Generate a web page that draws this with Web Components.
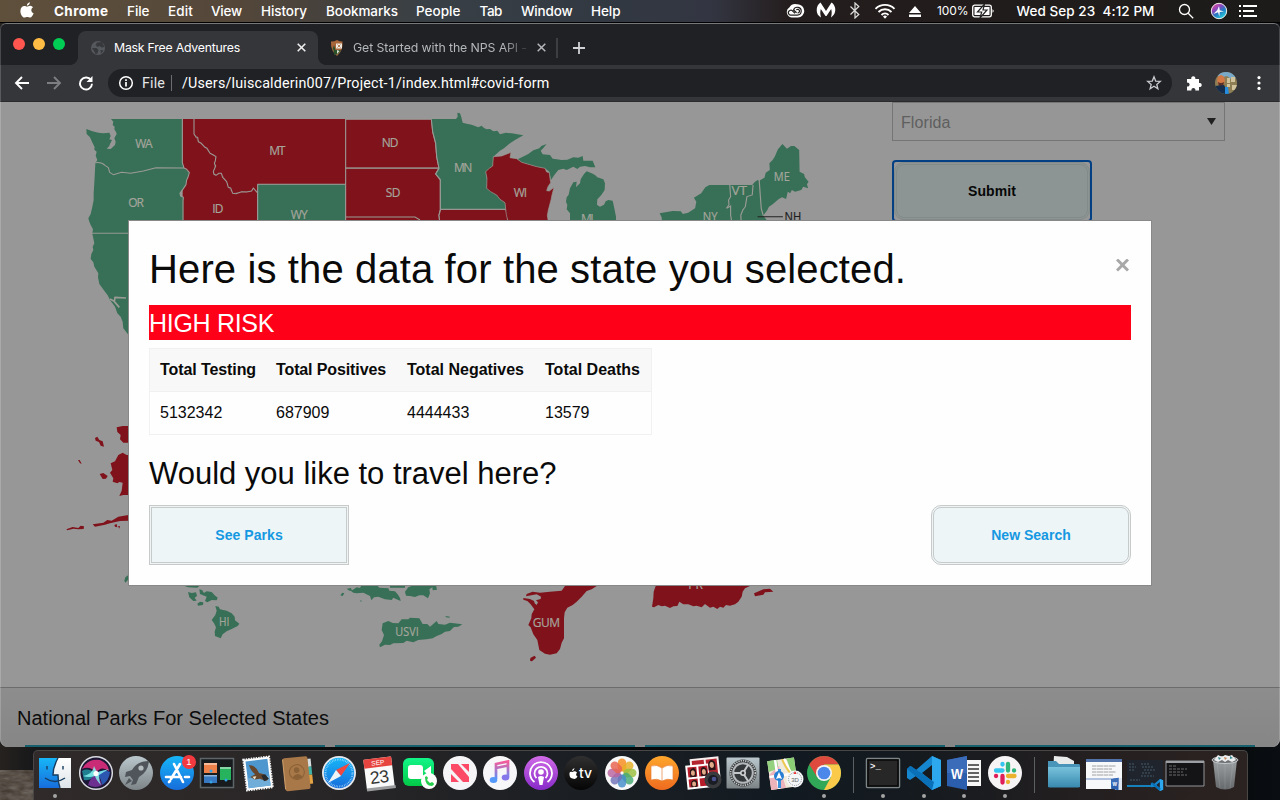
<!DOCTYPE html>
<html lang="en">
<head>
<meta charset="utf-8">
<title>Mask Free Adventures</title>
<style>
html,body{margin:0;width:1280px;height:800px;overflow:hidden;background:#08090b}
body{font-family:"Liberation Sans",Arial,sans-serif}
</style>
</head>
<body>
<mac-desktop>
  <menu-bar></menu-bar>
  <browser-window>
    <tab-strip slot="chrome"></tab-strip>
    <nav-bar slot="chrome"></nav-bar>
    <risk-map slot="main"></risk-map>
    <state-form slot="main"></state-form>
    <parks-section slot="parks">National Parks For Selected States</parks-section>
    <data-modal slot="modal"></data-modal>
  </browser-window>
  <mac-dock></mac-dock>
</mac-desktop>
<script>
const define = (name, html, extra) => customElements.define(name, class extends HTMLElement {
  connectedCallback() {
    if (this.shadowRoot) return;
    this.attachShadow({mode: 'open'}).innerHTML = typeof html === 'function' ? html(this) : html;
    if (extra) extra(this);
  }
});

// One line of text spaced to fill the width given in "w"
define('fit-text', '<style>:host{display:inline-block;white-space:pre;flex:none}</style><span><slot></slot></span>', el => {
  const w = parseFloat(el.getAttribute('w'));
  if (!w) return;
  const span = el.shadowRoot.querySelector('span');
  const n = el.textContent.length;
  const natural = span.getBoundingClientRect().width;
  el.style.width = w + 'px';
  span.style.letterSpacing = ((w - natural) / n) + 'px';
});

define('mac-desktop', `<style>:host{display:flex;flex-direction:column;width:1280px;height:800px;position:relative;overflow:hidden;
 background:linear-gradient(90deg,#26221f 0,#17181a 34px,#050608 500px,#06080a 1200px,#0a0e12 100%)}
 .rock{position:absolute;left:0;top:770px}</style>
 <svg class="rock" width="34" height="30"><defs><filter id="n"><feTurbulence type="fractalNoise" baseFrequency=".08 .2" numOctaves="3" seed="4"/><feColorMatrix values="0 0 0 0 .15  0 0 0 0 .13  0 0 0 0 .11  1.6 0 0 0 -.3"/></filter></defs><rect width="34" height="30" fill="#453c34"/><rect width="34" height="30" filter="url(#n)"/><path d="M0 10q12 1 18 9t14 11M0 3q18 1 33 8" stroke="#64574a" fill="none" opacity=".5"/></svg>
 <slot></slot>`);

define('menu-bar', `<style>
:host{display:flex;align-items:center;box-sizing:border-box;height:23px;padding:0 0 1px 20px;flex:none;border-bottom:1px solid #000;color:#fff;
 font:500 13.5px Inter,Roboto,sans-serif;background:linear-gradient(90deg,#5f503c 0,#54473a 240px,#45413d 330px,#384046 430px,#323841 620px,#333642 710px,#241d1d 790px,#1c1b19 100%)}
svg{flex:none;fill:#fff}b{font-weight:700}</style>
<svg width="14" height="17" viewBox="0 0 14 17"><path d="M9.9 .2c.1 1.4-1.1 3.3-3 3.5C6.700 2 8.200 .5 9.900 .2ZM7 4.600c.8 0 1.800-.9 3.300-.8 1.200.1 2.100.6 2.700 1.500-2.600 1.700-2 5 .6 6-.6 1.800-2 4.300-3.500 4.300-1.100 0-1.600-.7-2.900-.7s-1.800.7-2.800.7C2.500 15.700.4 12.300.4 9c0-3.300 2-5 4-5 1.100 0 2 .7 2.600.7Z"/></svg>
<fit-text style="margin-left:20px;font-weight:700" w="54.500">Chrome</fit-text>
<fit-text style="margin-left:18.500px" w="22.500">File</fit-text>
<fit-text style="margin-left:18.500px" w="25">Edit</fit-text>
<fit-text style="margin-left:18px" w="31">View</fit-text>
<fit-text style="margin-left:19px" w="46">History</fit-text>
<fit-text style="margin-left:19px" w="72">Bookmarks</fit-text>
<fit-text style="margin-left:18px" w="44.500">People</fit-text>
<fit-text style="margin-left:19px" w="22.500">Tab</fit-text>
<fit-text style="margin-left:19px" w="51.500">Window</fit-text>
<fit-text style="margin-left:18.500px" w="29.500">Help</fit-text>
<svg style="margin-left:164.500px" width="20" height="16" viewBox="0 0 20 16"><path d="M6.500 14.500A5.600 5.600 0 0 1 4.500 4.200 6.800 6.800 0 0 1 12 1.200a7 7 0 0 1 7.300 6.800 6.500 6.500 0 0 1-6.300 6.500Z"/><path d="M10 10.300 8 8.400a2.500 2.500 0 1 0-1.500 3.700h5.900a3.900 3.900 0 1 0-3.800-5.100l3 2.800m-.3-2.800a1.800 1.800 0 1 1 1.300 2.900" fill="none" stroke="#25201f" stroke-width="1.200"/></svg>
<svg style="margin-left:11px" width="20" height="17" viewBox="0 0 20 17"><path d="M4.500.5 10 9l5.500-8.500c3 2 4.500 6 3.500 9.500-.6 2.400-2 4-4 5.500.8-3 1-5.500.2-8.500L10.500 14h-1L4.800 7c-.8 3-.6 5.500.2 8.500C2 13.800.8 11.500.7 8.500.600 5 2 2.200 4.500.5Z"/></svg>
<svg style="margin-left:13px" width="12" height="17" viewBox="0 0 12 17"><path d="m1.500 4.500 8.300 8L6 16V1l3.800 3.500-8.300 8" fill="none" stroke="#ddd" stroke-width="1.200"/></svg>
<svg style="margin-left:13px" width="22" height="16" viewBox="0 0 22 16"><g fill="none" stroke="#fff" stroke-width="1.900"><path d="M1.500 5.800a13.500 13.500 0 0 1 19 0M4.500 9a9.200 9.200 0 0 1 13 0M7.500 12a5 5 0 0 1 7 0"/></g><path d="m11 15.800-2-2.200a2.800 2.800 0 0 1 4 0Z"/></svg>
<svg style="margin-left:12px" width="14" height="14" viewBox="0 0 14 14"><path d="M7 2l6 7H1ZM1 10.500h12V13H1Z"/></svg>
<fit-text style="margin-left:15px;font-size:12px;font-weight:400" w="31.500">100%</fit-text>
<svg style="margin-left:3.500px" width="23" height="14" viewBox="0 0 23 14"><rect x=".7" y="1.200" width="18.600" height="11.600" rx="2" fill="none" stroke="#fff" stroke-width="1.300"/><path d="M2.500 3h15v8h-15ZM20.500 5.300c1.600.5 1.600 3 0 3.500Z"/><path d="m12.500 0-7 8h4.200L8 14l7-8h-4Z" stroke="#222" stroke-width="1.200"/></svg>
<fit-text style="margin-left:21.500px" w="138">Wed Sep 23  4:12 PM</fit-text>
<svg style="margin-left:23.500px" width="16" height="16" viewBox="0 0 16 16"><g fill="none" stroke="#fff" stroke-width="1.300"><circle cx="6.500" cy="6.500" r="5"/><path d="m10.200 10.200 5 5"/></g></svg>
<svg style="margin-left:16px" width="18" height="18" viewBox="0 0 18 18"><defs><linearGradient id="s" x2=".7" y2="1"><stop stop-color="#fa4c8c"/><stop offset=".4" stop-color="#8c46bd"/><stop offset=".65" stop-color="#227bc2"/><stop offset="1" stop-color="#29d6e0"/></linearGradient></defs><circle cx="9" cy="9" r="7.700" fill="url(#s)" stroke="#eee"/><path d="m9 4 .8 4.200L14 9.500 9.800 10l-.5 4.500L8 10.200 3.500 12l3.800-4Z" opacity=".95"/></svg>
<svg style="margin-left:11px" width="18" height="14" viewBox="0 0 18 14"><path d="M0 1h2v2H0ZM4 1h14v2H4ZM0 6h2v2H0ZM4 6h11v2H4ZM0 11h2v2H0ZM4 11h14v2H4Z"/></svg>`);

define('browser-window', `<style>
:host{display:flex;flex-direction:column;position:relative;width:1280px;height:724px;flex:none;border-radius:6px 6px 8px 8px;overflow:hidden;background:#979797}
.top{display:flex;flex-direction:column;flex:none;background:#202124}
.page{display:flex;flex-direction:column;flex:1;min-height:0;position:relative;border-top:1px solid #2a2a2c;margin-top:-1px}
main{display:flex;height:585px;flex:none}
.frame{position:absolute;inset:0;border:1px solid #ffffff2e;border-top-color:#77787a;border-bottom:none;border-radius:6px 6px 8px 8px;pointer-events:none}
</style><div class="top"><slot name="chrome"></slot></div>
<div class="page"><main><slot name="main"></slot></main><slot name="parks"></slot><slot name="modal"></slot></div><div class="frame"></div>`);

define('tab-strip', `<style>
:host{display:flex;height:42px;align-items:flex-end;color:#fff;font:400 12.300px Inter,Roboto,sans-serif;background:#202124}
.lights{display:flex;gap:8px;width:65px;padding-left:13px;align-self:flex-start;padding-top:15px}
.lights i{width:12px;height:12px;border-radius:50%}
.tab{display:flex;align-items:center;height:34px;box-sizing:border-box;padding-bottom:1px}
.on{width:240px;background:#35363a;border-radius:8px 8px 0 0;padding-left:12px;position:relative}
.on:before,.on:after{content:"";position:absolute;bottom:0;width:8px;height:8px}
.on:before{left:-8px;background:radial-gradient(circle at 0 0,#202124 7.600px,#35363a 8.200px)}
.on:after{right:-8px;background:radial-gradient(circle at 100% 0,#202124 7.600px,#35363a 8.200px)}
.off{width:240px;padding-left:11px;color:#b4b7bb}
.fade{-webkit-mask:linear-gradient(90deg,#000 150px,#0002 174px);mask:linear-gradient(90deg,#000 150px,#0002 174px)}
svg{flex:none}</style>
<div class="lights"><i style="background:#ff5650"></i><i style="background:#ffbd45"></i><i style="background:#00ce54"></i></div>
<div class="tab on"><svg width="16" height="16" viewBox="0 0 16 16"><circle cx="8" cy="8" r="7" fill="#55585d"/><path d="M7 2.500 12 2l2.500 5-3 .5L9.500 6 7.500 7l-2-2ZM2 8h4.500l2 2-1 3.500-2 .5L4 11Zm8.500 2 3 .5-2.500 3Z" fill="#36383c"/></svg>
<fit-text w="126" style="margin-left:8px">Mask Free Adventures</fit-text>
<svg style="margin-left:56px" width="11" height="11" viewBox="0 0 11 11"><path d="m1.700 1.700 7.600 7.600m0-7.600-7.600 7.600" stroke="#eee" stroke-width="1.600"/></svg></div>
<div class="tab off"><svg width="16" height="18" viewBox="0 0 16 18"><path d="M2 2.500Q5 2.700 8 1q3 1.700 5.500 1.500.8 9-5.500 14.500Q1.300 11.500 2 2.500Z" fill="#a8663a"/><path d="M7 4.500h6v5H7Z" fill="#f0ece2"/><path d="m8.500 5.500 3 3m0-3-3 3" stroke="#a8663a" stroke-width=".8"/><path d="M5 6 3.500 10.500h1L5.200 16 9 15l3-4H6.500Z" fill="#29502b"/><path d="m8 11 2.500 1L8 15Z" fill="#d8e3d4"/></svg>
<fit-text class="fade" w="174" style="margin-left:8px">Get Started with the NPS API -</fit-text>
<svg style="margin-left:8.500px" width="11" height="11" viewBox="0 0 11 11"><path d="m1.700 1.700 7.600 7.600m0-7.600-7.600 7.600" stroke="#b5b7ba" stroke-width="1.500"/></svg></div>
<div class="tab" style="margin-left:-2px"><svg width="32" height="20" viewBox="0 0 32 20"><path d="M1 0v20" stroke="#5a5c60"/><path d="M23 4v12M17 10h12" stroke="#d0d2d5" stroke-width="1.800"/></svg></div>`);

define('nav-bar', `<style>
:host{display:flex;align-items:center;height:37px;box-sizing:border-box;background:#35363a;color:#fff;padding-left:14px;font:400 14.300px Roboto,sans-serif;border-bottom:1px solid #28292c}
svg{flex:none;fill:none;stroke:#fff;stroke-width:1.900}
.omni{display:flex;align-items:center;width:1064px;height:28px;border-radius:14px;background:#202124;margin-left:14px;box-sizing:border-box;padding-left:10px}
</style>
<svg width="16" height="16" viewBox="0 0 16 16"><path d="M15 8H2.500M8 2 2 8l6 6"/></svg>
<svg style="margin-left:16px;stroke:#7c7e82" width="16" height="16" viewBox="0 0 16 16"><path d="M1 8h12.500M8 2l6 6-6 6"/></svg>
<svg style="margin-left:16px" width="16" height="16" viewBox="0 0 16 16"><path d="M13 5.200A6 6 0 1 0 14 8.800"/><path d="M14.500 1v6h-6Z" fill="#fff" stroke="none"/></svg>
<div class="omni"><svg width="16" height="16" viewBox="0 0 16 16" style="stroke-width:1.500"><circle cx="8" cy="8" r="6.300"/><path d="M8 7v4.500M8 4.200v1.700" stroke-width="1.700"/></svg>
<fit-text w="23" style="margin-left:8px;color:#e4e5e7">File</fit-text><i style="width:1px;height:16px;background:#6b6d71;margin-left:6px"></i>
<fit-text w="367.500" style="margin-left:10px">/Users/luiscalderin007/Project-1/index.html#covid-form</fit-text>
<svg style="margin-left:596px" width="16" height="16" viewBox="0 0 16 16"><path d="m8 1.800 1.700 4.300 4.600.3-3.500 3 1.100 4.400L8 11.300l-3.900 2.500 1.100-4.400-3.500-3 4.600-.3Z" stroke="#c8cacd" stroke-width="1.300"/></svg></div>
<svg style="margin-left:14px" width="16" height="16" viewBox="0 0 16 16"><path d="M1 4h4.300a2.100 2.100 0 1 1 4 0H13v4a2.100 2.100 0 1 1 0 4v3.500H9.300a2 2 0 1 0-3.800 0H1v-4a2 2 0 1 0 0-3.800Z" fill="#fff" stroke="none"/></svg>
<svg style="margin-left:13px;stroke:none" width="22" height="22" viewBox="0 0 22 22"><defs><clipPath id="c"><circle cx="11" cy="11" r="11"/></clipPath></defs><g clip-path="url(#c)"><path d="M0 0h22v22H0Z" fill="#8d7d55"/><path d="M0 0h22v6l-6 1-4-3-7 2Z" fill="#78a9c9"/><path d="M12 6h3v5h-3ZM16 5h4v5h-4ZM17 13h5v5h-5ZM12 12h3v3h-3Z" fill="#d0c29a"/><ellipse cx="6" cy="8.500" rx="3.800" ry="5.500" fill="#d27946"/><path d="M3 10q3 2 6 0l-1 5H4Z" fill="#5a3027"/><path d="M0 14l9-1 5 9H0Z" fill="#162e4b"/><path d="m10 15 3 0 1 7h-4Z" fill="#268cdd"/></g></svg>
<svg style="margin-left:18.500px;stroke:none" width="6" height="16" viewBox="0 0 6 16"><g fill="#fff"><circle cx="3" cy="2.600" r="1.600"/><circle cx="3" cy="8" r="1.600"/><circle cx="3" cy="13.400" r="1.600"/></g></svg>`);

define('risk-map', `<style>:host{display:block;width:860px;height:585px;flex:none}
svg{display:block}.g{fill:#387057}.r{fill:#80121b}path{stroke:#9b9b96;stroke-width:0}.b path{stroke-width:3.200}.l{fill:none!important;stroke-width:3.200}
text{font-family:"Open Sans","Noto Sans",sans-serif;font-size:36px;fill:#a5a59c;stroke:#a5a59c;stroke-width:.6px}</style>
<svg width="860" height="585" viewBox="0 102 860 585">
<g transform="translate(60 100) scale(.333333)">
<g class="b" stroke-linejoin="round">
<path class="r" d="M368 57H402V102L415 125 435 142 450 160 468 170 465 190 460 215 468 226 484 220 500 245 505 262 518 280 545 275 575 273 580 264 591 277V400H368Z" style="stroke-width:0"/>
<path class="r" d="M402 57H857V252H593V277L580 264 575 273 545 275 518 280 505 262 500 245 484 220 468 226 460 215 465 190 468 170 450 160 435 142 415 125 402 102Z" style="stroke-width:0"/>
<path class="l" d="M402 57V102L409 112 413 112 415 125 424 130 435 142 441 145 450 160 460 165 468 170 466 182 463 190 467 198 460 215 462 223 468 226 476 220 484 220 488 232 500 245 505 262 512 264 518 280 528 281 545 275 560 276 575 273 580 264 591 277"/>
<path class="g" d="M593 400V253H857V400Z"/>
<path class="g" style="stroke-width:0" d="M153 57H367L367 188 372 204 388 218 380 240 376 258 360 280 362 288 370 292V400H97L99 388 92 375 88 365 85 355 92 342 97 320 101 300V280L104 230 106 190 112 180 107 167 110 155 103 149 104 142 96 125 90 112 80 102 79 87 95 93 115 98 130 100 148 98 152 108 148 118 156 120 150 132 148 138 140 146 152 147 165 135 167 125 163 115 170 102 168 96 163 88 164 80 158 75 160 65Z"/>
<path class="l" d="M367 57V188L372 204 380 208 388 218 384 232 380 240 378 254 370 266 360 280 362 288 370 292 369 304V400M106 188Q125 185 135 196L145 203 149 217 160 224 185 217 212 220 250 213 288 203 372 204M95 400H206"/>
<path class="g" style="stroke-width:0" d="M97 401H205L300 720 210 715 204 703 190 685 188 665 182 650 172 640 165 620 150 600 143 586 135 575 118 552 114 532 115 520 103 500 100 487 92 477 94 462 100 450 98 440 103 430Z"/>
<path class="l" d="M198 594 165 592 163 605 178 622M150 597 165 605" style="stroke-width:5"/>
</g>
<text x="226" y="144" textLength="52">WA</text><text x="628" y="165" textLength="48">MT</text><text x="205" y="320" textLength="47">OR</text><text x="457" y="340" textLength="33">ID</text><text x="692" y="357" textLength="51">WY</text></g>
<g transform="translate(340 100) scale(.333333)"><g class="b">
<path class="r" d="M17 58H275L278 95 287 130 290 170 297 204H17Z"/><path class="r" d="M17 205H297L287 222 301 240V328L297 345 300 375H17Z"/><path class="l" d="M17 351H225L240 360"/>
<path class="r" d="M302 328H497L503 345 503 375H300L297 345Z"/>
<path class="g" style="stroke-width:0" d="M274 57H348L353 50 352 38 360 40 364 52 368 68 380 71 395 74 415 82 425 77 432 84 440 88 450 87 460 94 472 92 480 103 498 98 515 100 550 106 525 120 510 130 492 145 480 152 460 170 458 198 437 215 441 240 440 265 470 285 480 298 495 308 497 327H303L301 238 287 222 297 205 290 170 287 130 278 95Z"/>
<path class="l" d="M274 58 278 95 287 130 290 170 297 205 287 222 301 238V328H497"/>
<path class="g" style="stroke-width:0" d="M533 178 565 162 580 151 598 145 604 138 620 132 610 144 602 152 608 163 630 165 638 176 650 178 665 180 682 179 700 172 715 173 728 168 730 182 758 182 766 202 750 202 735 198 720 200 712 207 700 200 680 210 670 206 655 210 643 225 633 240 628 215 615 205 590 200 545 187Z"/>
<path class="r" style="stroke-width:2" d="M460 170 485 168 513 157 510 173 530 176 545 187 590 200 615 205 620 216 628 218 630 235 632 248 624 260 620 272 628 273 642 262 636 285 633 300 625 330 622 347 627 375H503V360L499 345 495 308 480 298 470 285 452 275 440 265 441 235 437 215 448 205 458 198Z"/>
<path class="g" style="stroke-width:0" d="M732 222 740 214 755 220 765 225 772 232 790 238 795 250 794 270 784 285 772 298 771 314 780 320 792 314 797 304 805 300 818 302 824 330 828 350V375H690V340L680 328 682 315 678 305 680 292 686 284 690 265 700 247 710 245 708 262 720 250 722 238Z"/></g>
<text x="125" y="140" textLength="50">ND</text><text x="342" y="217" textLength="55">MN</text><text x="137" y="290" textLength="44">SD</text><text x="521" y="290" textLength="40">WI</text><text x="723" y="370" textLength="38">MI</text></g>
<g transform="translate(640 100) scale(.408163 .333333)">
<path class="g" d="M349 132 360 146 370 138 378 138 390 150 391 215 402 222 404 232 413 245 409 253 412 265 400 260 395 270 380 275 372 270 368 280 362 275 358 297 348 292 340 297 325 313 316 320 312 330 302 347 320 375H55L53 352 48 340 80 333 100 334 105 342 118 338 135 325 138 305 132 293 150 280 160 262 170 255H275L281 246 288 240 292 242 305 233 308 218 318 210 317 190 325 180 330 170 338 148Z"/>
<path class="l" d="M220 255 222 290 217 300 218 314 212 325 222 318 222 345 226 375M277 255 275 285 262 290 258 320 252 330 247 345 248 375M292 240 297 325 302 347" style="stroke-width:2.800"/><path d="M288 350H350" style="stroke:#222;stroke-width:3"/>
<text x="328" y="243" textLength="39" lengthAdjust="spacingAndGlyphs">ME</text><text x="224" y="284" textLength="38" lengthAdjust="spacingAndGlyphs">VT</text><text x="154" y="362" textLength="36" lengthAdjust="spacingAndGlyphs">NY</text><text x="354" y="362" textLength="41" lengthAdjust="spacingAndGlyphs" style="fill:#1d1d1d;stroke:#1d1d1d">NH</text></g>
<g transform="translate(60 420) scale(.333333)">
<path class="r" d="M170 22 188 18H215V68H190L180 58 182 45 172 36ZM105 54 112 50 118 60 128 64 132 80 122 77 117 66 107 62ZM54 120 59 120 65 131 60 130ZM152 130 165 124 175 105 188 98 200 105 215 105V225H190L178 228 185 212 188 188 178 186 172 190 158 185 160 175 150 158 157 150ZM119 162 130 159 143 168 138 176 128 177ZM98 313 130 308 142 300 155 302 175 290 205 285V302L180 303 150 310 135 314 105 320ZM19 328 38 321 55 324 62 317 72 319 71 327 55 328 40 326 22 331ZM163 315 170 312 172 322 165 320ZM174 319 180 318 178 326Z"/>
<path class="g" d="M193 482 196 472 206 464V478L196 488ZM365 495H421L412 503 385 502ZM384 516 395 519 408 517 411 528 404 533 410 542 400 543 388 532ZM418 508 426 510 432 519 440 514 455 516 464 526 473 533 470 541 455 540 442 547 435 543 440 530 420 522ZM412 551 420 545 430 547 429 555 414 557ZM466 558 476 560 480 568 500 572 515 580 524 590 525 601 538 611 533 618 515 627 500 634 488 643 482 655 465 648 464 635 468 622 462 610 455 600 466 585 470 572ZM841 526 847 518 853 520 848 528ZM860 506 873 504 876 512 868 512ZM873 513 890 502 900 504 905 495H950L958 503 985 505 988 512 1005 514 1013 523 1020 534 1022 543 1008 537 1000 533 995 540 975 538 955 530 942 532 934 541 930 528 910 518 890 520 880 518ZM990 498H1035V503H990ZM1035 515 1045 502 1060 496H1128L1131 509 1118 511 1117 502 1108 508 1110 520 1104 535 1090 526 1078 526 1065 531 1050 528 1038 527ZM901 541 906 542 902 546ZM968 610 985 603 998 609 1015 610 1025 598 1045 598 1050 593 1078 595 1088 612 1102 612 1110 620 1130 603 1135 612 1155 614 1170 608 1207 613 1195 620 1182 621 1170 633 1155 635 1145 642 1130 648 1118 655 1100 658 1075 660 1060 667 1040 662 1030 669 1000 670 990 675 975 674 960 682 958 674 966 664 972 645 965 630ZM1156 588 1170 590 1168 593 1158 592Z"/>
<text x="477" y="618" textLength="31" lengthAdjust="spacingAndGlyphs">HI</text><text x="1006" y="648" textLength="70" lengthAdjust="spacingAndGlyphs">USVI</text></g>
<g transform="translate(440 575) scale(.333333)">
<path class="r" d="M375 33H470L455 43 440 48 425 65 410 80 398 90 382 98 374 112 372 130V190L365 203 360 222 350 235 330 239 315 236 298 225 292 195 280 178 272 157 265 150 274 130 275 118 283 103 272 88 262 78 250 74V69L270 72 282 78 284 85 290 90 294 82 288 76 302 72 303 65 290 58 258 64 260 57 278 50 300 53 330 50 365 47ZM270 254 272 248 284 242 288 248 276 259 271 258ZM647 33H930L915 40 908 50 905 65 895 80 885 88 870 92 858 90 850 98 840 95 832 102 820 95 810 98 795 87 785 97 770 92 760 94 745 88 730 88 718 80 712 93 700 94 690 99 675 92 665 94 655 90 642 97 636 95 640 70 641 50ZM942 55 953 50 970 43 990 41 1000 50 975 52 970 59 945 64Z"/>
<text x="278" y="155" textLength="82">GUM</text><text x="745" y="42" textLength="44">PR</text></g>
</svg>`);

define('push-button', `<style>:host{display:flex;align-items:center;justify-content:center;box-sizing:border-box;width:200px;height:60px;border:3px double #c8caca;background:#edf5f7;color:#1598e2;font-weight:700;font-size:14px;flex:none}
:host([round]){border-radius:10px}</style><slot></slot>`);

define('state-form', `<style>:host{display:flex;flex-direction:column;gap:19px;padding:0 0 0 32px;width:333px;align-items:flex-start;overflow:hidden}
.sel{display:flex;align-items:center;justify-content:space-between;width:333px;height:39px;box-sizing:border-box;border:1px solid #757575;background:#969696;color:#5f5f5f;padding:2px 8px 0;font-size:16px}
.ring{border-radius:4px;background:#979797;box-shadow:inset 0 0 0 2px #023f83;width:200px;height:62px;box-sizing:border-box;padding:2px}
push-button{width:196px;height:58px;background:#8c9594;color:#070707;border:3px double #838a8a}</style>
<div class="sel"><fit-text w="49.500">Florida</fit-text><svg width="9" height="7" style="margin-top:-3px"><path d="M0 0h9l-4.500 7Z" fill="#202020"/></svg></div>
<div class="ring"><push-button round><fit-text w="48">Submit</fit-text></push-button></div>`);

define('parks-section', `<style>:host{display:flex;flex-direction:column;box-sizing:border-box;height:60px;border-top:1px solid #6c6c6c;background:linear-gradient(#8d8d8d,#868686);color:#0c0c0c;font-size:20px}
.t{height:57px;line-height:61px;padding-left:17px}.row{display:flex;gap:10px;padding-left:25px}.row i{width:300px;height:2px;background:#16606d}</style>
<div class="t"><fit-text w="312">National Parks For Selected States</fit-text></div><div class="row"><i></i><i></i><i></i><i></i></div>`);

define('data-modal', `<style>:host{position:absolute;left:128px;top:118px;width:1024px;height:366px;box-sizing:border-box;border:1px solid #888;background:#fefefe;padding:20px;display:flex;flex-direction:column;color:#0a0a0a}
.h{display:flex;justify-content:space-between;height:56px;line-height:57px;font-size:40px}
.x{padding:17.500px 2px 0}
.risk{margin-top:8px;height:35px;line-height:37px;background:#ff0019;color:#fefefe;font-size:25px}
.tbl{display:grid;grid-template-columns:116px 131px 138px 116px;width:501px;margin-top:8px;border:1px solid #f1f1f1;font-size:16px}
.tbl>*{box-sizing:border-box;height:42px;padding-left:10px;line-height:42px}
.th{background:#f8f8f8;font-weight:700;border-bottom:1px solid #f0f0f0;height:43px}
.q{margin-top:16px;height:54px;line-height:45px;font-size:31px}
.btns{display:flex;justify-content:space-between}</style>
<div class="h"><fit-text w="757">Here is the data for the state you selected.</fit-text><svg class="x" width="13" height="13" viewBox="0 0 13 13"><path d="m1 1 11 11M12 1 1 12" stroke="#a8a8a8" stroke-width="3"/></svg></div>
<div class="risk"><fit-text w="125">HIGH RISK</fit-text></div>
<div class="tbl"><div class="th"><fit-text w="96">Total Testing</fit-text></div><div class="th"><fit-text w="110">Total Positives</fit-text></div><div class="th"><fit-text w="117">Total Negatives</fit-text></div><div class="th"><fit-text w="95">Total Deaths</fit-text></div>
<div>5132342</div><div>687909</div><div>4444433</div><div>13579</div></div>
<div class="q"><fit-text w="407.500">Would you like to travel here?</fit-text></div>
<div class="btns"><push-button><fit-text w="67.500">See Parks</fit-text></push-button><push-button round><fit-text w="79.500">New Search</fit-text></push-button></div>`);

// Dock artwork, drawn round the centre of each 40px cell
const word = (x, y, s) => `<g transform="translate(${x} ${y}) scale(${s})"><path d="M-16-13 4-17V17L-16 13Z" fill="#2b5eac"/><path d="M-16-13 4-17V0H-16Z" fill="#3a6cb9"/><text x="-6" y="5.500" font-size="15" font-weight="700" fill="#fff" text-anchor="middle" textLength="12" lengthAdjust="spacingAndGlyphs">W</text></g>`;
const code = (x, y, s) => `<g transform="translate(${x} ${y}) scale(${s})"><path d="M8-17 17-13V13L8 17-8 3-14 7-17 5V-4L-14-7-8-3ZM8-8-2 0 8 8Z" fill="#1687cf" fill-rule="evenodd"/><path d="M8-17 17-13V13L8 17Z" fill="#2da7ee"/><path d="m-17-4 4-3L10 9l-2 8Z" fill="#0a70b7"/></g>`;
const art = {
finder:`<path d="M-16-15H16V15H-16Z" fill="url(#w)"/><path d="M-16-15H3Q-2-6-2 2H3Q3 9 5 15H-16Z" fill="url(#bl)"/><path d="M-8-7v3.500M8-7v3.500M-10 5Q0 12 10 5M3-15Q-2-6-2 2H3Q3 9 5 15" fill="none" stroke="#173c60" stroke-width="1.400"/>`,
siri:`<circle r="16.300" fill="#1b1734" stroke="#dadce2" stroke-width="1.500"/><path d="M-14-4Q-8-15 4-13 12-10 13-2 5-8 0 0-6-8-14-4Z" fill="#c92b76"/><path d="M-14-2Q-8-6 0 1-4 8-12 7Z" fill="#1f7f91"/><path d="M0 0Q8-5 14-1 13 8 6 12 5 4 0 0Z" fill="#2b57b0"/><path d="M0 1Q-6 5-8 12 0 16 6 12 4 5 0 1Z" fill="#6c2f8f"/><path d="M-13 3Q-3 1-2-7 0-2 2-1L13-4Q6 0 3 2 3 8 5 12 0 7-1 3-7 5-13 3Z" fill="#86f3f0" opacity=".85"/><circle cy=".5" r="2.600" fill="#fff"/>`,
rocket:`<circle r="17" fill="url(#gr)"/><path d="M13-12Q1-12-4-3L-10-1-11 4-6 3-3 7-5 12 0 11 3 4Q12-1 13-12Z" fill="#4f555a"/><circle cx="5" cy="-5" r="2.600" fill="#b4bcc0"/><path d="m-7 5-4 7 7-4Z" fill="#4f555a"/>`,
store:`<circle r="17" fill="url(#bl)"/><path d="M-3-9 6 9M3-9-6 6M-11 4H4M8 4h4M-8 9l1-1" stroke="#fff" stroke-width="2.600" stroke-linecap="round"/><circle cx="12" cy="-11" r="7" fill="#f2393f"/><text x="12" y="-7.600" font-size="9.500" fill="#fff" text-anchor="middle">1</text>`,
mission:`<rect x="-16.500" y="-14.500" width="33" height="29" fill="#181b1e" stroke="#5d6669" stroke-width="1.500"/><path d="M-13-10H0V0H-13Z" fill="#ee8149"/><path d="M-13 2H0V10H-13Z" fill="#3778c1"/><path d="M3-6H14V7H3Z" fill="#27b25d"/><path d="M-13-10H0V-8H-13ZM-13 2H0V3.500H-13ZM3-6H14V-4H3Z" fill="#fff" opacity=".45"/><g fill="#32a4e8"><circle cx="-6" cy="-2" r="1.500"/><circle cx="9" cy="7" r="1.500"/><circle cx="-6" cy="9" r="1.500"/></g>`,
mail:`<g transform="rotate(-7)"><path d="M-13-15H13V16H-13Z" fill="#fff" stroke="#f5f5f5" stroke-width="2" stroke-dasharray="1.500 1"/><path d="M-11-13H11V14H-11Z" fill="#4d96ce"/><path d="M-11 4H11v10H-11Z" fill="#70add8"/><path d="M-8-9Q-1-8 1 0L6 2 10 7 7 9 1 6-4 6-8 3-3 1Q-7-3-8-9Z" fill="#65462c"/><path d="m3 3 4-1 3 5-5 2Z" fill="#282b2e"/><path d="m-6 3 4 0-2 3Z" fill="#f0e5d0"/></g>`,
contacts:`<g transform="rotate(-6)"><path d="M10-13h4V-5H10Z" fill="#d6dee0"/><path d="M10-5h4V3H10Z" fill="#42b4a7"/><path d="M10 3h4V12H10Z" fill="#e6a343"/><rect x="-14" y="-16" width="25" height="33" rx="2" fill="#a87848"/><path d="M-14-15v30" stroke="#d1a26d"/><g stroke="#8a6136" fill="none"><circle cx="-1" cy="-1" r="7.500"/></g><circle cx="-1" cy="-3" r="2.800" fill="#8a6136"/><path d="M-6 4Q-1-2 4 4-1 8-6 4" fill="#8a6136"/></g>`,
safari:`<circle r="17" fill="#e8e9ed"/><circle r="15.200" fill="url(#bl)"/><circle r="13.500" fill="none" stroke="#c0e9ff" stroke-width="2" stroke-dasharray=".5 1.200"/><path d="M11-10 2 3-3-3Z" fill="#f14840"/><path d="M-11 10 2 3-3-3Z" fill="#eef3f6"/>`,
calendar:`<g transform="rotate(-7)"><rect x="-14" y="-15" width="28" height="31" rx="1" fill="#fafafa"/><path d="M-14-15H14v9H-14Z" fill="#e7443f"/><path d="M-14 14h29v3h-29Z" fill="#9b9d9f"/><text y="-8" font-size="6.500" fill="#fff" text-anchor="middle">SEP</text><text x="0" y="10" font-size="17.500" fill="#333" text-anchor="middle" textLength="19">23</text></g>`,
facetime:`<rect x="-17" y="-15" width="31" height="28" rx="6" fill="url(#gn)"/><rect x="-12" y="-8" width="15" height="14" rx="3" fill="#fff"/><path d="m4-2 7-5V5Z" fill="#fff"/><circle cx="9" cy="8" r="8" fill="#fff"/><path d="M5 4q2-2 3 1l-1 2 3 3 2-1q4 2 0 4Q5 13 5 4Z" fill="#25cf4c"/>`,
news:`<circle r="17" fill="#f5f5f8"/><path d="M-9-9H-2L9 4V9H3L-9-4Z" fill="#fb4966"/><path d="M1-9H9V-1ZM-9 1V9H-1Z" fill="#fb4966"/>`,
music:`<circle r="17" fill="#f7f7fa"/><path d="M-4 6V-9L8-11.500V4M-4-5 8-7.500" stroke="url(#mu)" stroke-width="2.700" fill="none"/><ellipse cx="-6.500" cy="7" rx="3.800" ry="3" fill="#559afa"/><ellipse cx="5.500" cy="4.500" rx="3.800" ry="3" fill="#8676eb"/>`,
podcasts:`<circle r="17" fill="url(#pu)"/><g fill="none" stroke="#fff" stroke-width="1.800"><path d="M-6.500 9A11 11 0 1 1 6.500 9"/><path d="M-4.500 5A6.500 6.500 0 1 1 4.500 5"/></g><circle cy="-1" r="2.800" fill="#fff"/><path d="M-3 4Q0 2 3 4L1.500 12H-1.500Z" fill="#fff"/>`,
tv:`<circle r="17" fill="url(#bk)"/><path d="M-6.500-5Q-7-2-9-2-9-4-6.500-5ZM-8.500-1Q-6-2.500-4-.5-6 2-3.500 3.500-5 7-8.500 5.500-12 5-11.500 0-11-2-8.500-1Z" fill="#fff"/><text x="-2" y="5" font-size="14" font-weight="500" font-family="Inter,sans-serif" fill="#fff">tv</text>`,
photos:`<circle r="17" fill="#f8f8f8"/>`+['#f78b1c','#e6ae24','#9abe3d','#45aa71','#448cc9','#7271b8','#b864a0','#e8614d'].map((c,i)=>`<rect x="-4.200" y="-14.500" width="8.400" height="13" rx="4.200" fill="${c}" opacity=".82" transform="rotate(${i*45})"/>`).join(''),
books:`<circle r="17" fill="url(#or)"/><path d="M0-5Q-5-9-11-7V7Q-5 5 0 8 5 5 11 7V-7Q5-9 0-5ZM0-5V8" fill="#fff" stroke="#e7833c" stroke-width=".7"/>`,
booth:`<g transform="rotate(-6)"><path d="M-12-15H17V9H-12Z" fill="#f8eeee"/><path d="M-10-13H2V8H-10ZM4-13H15V7H4Z" fill="#b42530"/><path d="M-17-9H6V15H-17Z" fill="#fff"/><path d="M-15-7H-6V3H-15ZM-4-7H5V3H-4ZM-15 5H-6V13H-15ZM-4 5H5V13H-4Z" fill="#b51d2a"/><g fill="#2a1416"><path d="M-13-1Q-13-6-9-6-6-5-7 0V3H-13ZM-2-1Q-2-6 1-6 5-5 4 0V3H-2ZM-13 10Q-13 6-9 6-6 6-7 11V13H-13ZM6-6Q6-12 10-12 14-11 13-5V-2H6Z"/></g><g fill="#e0a988"><ellipse cx="-10" cy="-1" rx="2" ry="2.800"/><ellipse cx="1" cy="-1" rx="2" ry="2.800"/><ellipse cx="-10" cy="10" rx="2" ry="2.500"/><ellipse cx="9.500" cy="-7" rx="2.200" ry="3"/></g></g><circle cx="10" cy="7" r="8.500" fill="#3a3b3e"/><circle cx="10" cy="7" r="5" fill="#1a1c24"/><circle cx="11" cy="6" r="2.300" fill="#4a5292"/>`,
settings:`<rect x="-16.500" y="-15.500" width="33" height="31" rx="1" fill="url(#gr)"/><circle r="13.500" fill="#35383a"/><circle r="12.300" fill="none" stroke="#c2c5c6" stroke-width="1.700" stroke-dasharray="1.300 1"/><circle r="9.800" fill="none" stroke="#b4b8ba" stroke-width="2"/><path d="M0 0-9 0M0 0 5-8M0 0 5 8" stroke="#c4c7c9" stroke-width="2"/><circle r="3" fill="#d0d2d3"/><circle r="1.400" fill="#34383a"/>`,
maps:`<g transform="rotate(-8)"><path d="M-15-14H12V15H-15Z" fill="#f0eadb"/><path d="M-15-14H-5V-5L-15-3Z" fill="#95d27f"/><path d="M4-14h8V5H5Q8-4 4-14Z" fill="#8bce76"/><path d="M-15 0-4-8 0 15H-15Z" fill="#edb3bb"/><path d="M-7-14V15M-15 2H12M2-14Q5-3 8 3" stroke="#fff" stroke-width="2.500" fill="none"/><path d="M0-14Q3-2 10 6" stroke="#ecc74f" stroke-width="2" fill="none"/></g><path d="M-6-4h3V15h-3Z" fill="#3b93de"/><circle cx="-5" cy="3" r="5" fill="#277fd4"/><path d="m-5-1 3 7-3-1-3 1Z" fill="#fff"/><circle cx="11" cy="6" r="8.500" fill="#f5f6f7"/><circle cx="11" cy="6" r="6.500" fill="none" stroke="#8b929b" stroke-dasharray="1 1"/><text x="11" y="8.500" text-anchor="middle" font-size="6" fill="#666">3D</text><path d="m11-2 1.500 3h-3Z" fill="#e33"/>`,
chrome:`<circle r="17" fill="#31a857"/><path d="M-14.700-8.500A17 17 0 0 1 14.700-8.500H0L-7 4Z" fill="#de4b3e"/><path d="M0-8.500H14.700A17 17 0 0 1 0 17L7 4Z" fill="#fbca4a"/><circle r="8" fill="#f4f4f4"/><circle r="6.300" fill="#4b88ea"/>`,
terminal:`<rect x="-16.500" y="-14.500" width="33" height="29" rx="1" fill="#272727" stroke="#7c8687" stroke-width="1.500"/><path d="M-15-13H15V13H-15Z" fill="none" stroke="#080808" stroke-width="1.500"/><text x="-13" y="-4" font-size="9" font-weight="700" font-family="Liberation Mono,monospace" fill="#eee">&gt;_</text>`,
code:code(0,0,1),
word:`<path d="M-2-13H17V13H-2Z" fill="#f7f7f7"/><path d="M4-8H15M4-4H15M4 0H15M4 4H15M4 8H15" stroke="#333" stroke-width="1.300"/>`+word(-1,0,1),
slack:`<circle r="17" fill="#f6f4f4"/><g stroke-width="4.300" stroke-linecap="round"><path d="M-2.500-9V-8.500M-9-2.500H-2.500" stroke="#36c5f0"/><path d="M3-9V-2.500M9-2.500h.1" stroke="#2eb67d"/><path d="M3 3H9.500M3 9v.1" stroke="#ecb22e"/><path d="M-2.500 3V9.500M-9 3h.1" stroke="#e01e5a"/></g>`,
folder:`<path d="M-10-17 3-16 10-12V0H-11Z" fill="#e9eaea"/><path d="M-16-12H-8L-5-9H15Q16-9 16-7V14H-16Z" fill="#4895b9"/><path d="M-16-6H16V13Q16 14.500 14 14.500H-14Q-16 14.500-16 13Z" fill="url(#fo)"/>`,
doc:`<path d="M-18-14H18V16H-18Z" fill="#f7f8fa"/><path d="M-18-14H18V-11H-18Z" fill="#5173aa"/><path d="M-18 6H18" stroke="#6a8cc3"/><path d="M-12-7H12M-12-4H8M-12-1H12M-12 2H9" stroke="#8b8b8b" stroke-width=".8" stroke-dasharray="4 .5 7 .5"/><path d="M11 5H18V17H11Z" fill="#dfe6f2"/>`+word(13,11,.37),
codewin:`<path d="M-18-13H18V13H-18Z" fill="#20242c"/><path d="M-18 12H12V14H-18Z" fill="#1680bd"/><path d="M-16-9H-10M-16-6H-9M-16-3H-11M-4-9H5M-3-6H8M-1-3H10M-3 0H6M-4 3H9M-15 7h10" stroke="#597187" stroke-width=".7" stroke-dasharray="2 1"/>`+code(12,12,.36),
termwin:`<path d="M-19-12H19V13H-19Z" fill="#141416" stroke="#919498"/><path d="M-19-12H19V-10H-19Z" fill="#9ca0a4"/><path d="M-16-7h8M-16-4h18M-16-1h14M-16 2h18" stroke="#8d8f91" stroke-width=".7" stroke-dasharray="3 1"/>`,
trash:`<path d="M-12-13 12-13 9 14Q0 19-9 14Z" fill="url(#tr)"/><path d="M-8-11-5 15M0-11V16M8-11 5 15" stroke="#c1c4c5" opacity=".2"/><ellipse cy="-13" rx="13" ry="3.500" fill="#6d7174" stroke="#c4c8ca"/><path d="m-11-13 4-5 4 2 3-2 4 1 3-1 4 5-4 2-4-2-3 2-3-2-4 2Z" fill="#eceded"/><path d="m-7-16 3 1-2 2ZM5-17l3 2-3 1Z" fill="#398b95"/><path d="m-1-16 3 1-2 2Z" fill="#ca8458"/>`
};
const gradients = [['w','#fff','#dde4e9'],['bl','#17b6f8','#176ddb'],['gr','#b9c7cc','#7d8487'],['gn','#12f588','#03c847'],['pu','#d16be8','#872ac8'],['bk','#303030','#050505'],['or','#fda62c','#ef6b1f'],['fo','#78c2dc','#3889ae'],['tr','#9da1a3','#66696b'],['mu','#f45b99','#5d91fa']];
define('dock-icon', el => `<style>:host{display:flex;flex-direction:column;align-items:center;width:40.470px;height:49px;flex:none;box-sizing:border-box}
svg{flex:none;margin-top:2px;overflow:visible;font-family:"Liberation Sans",sans-serif}i{width:4px;height:4px;border-radius:50%;background:#a4a4a4;margin-top:1px}</style>
<svg width="40" height="40" viewBox="-20 -20 40 40"><defs>${gradients.map(g=>`<linearGradient id="${g[0]}" x2="0" y2="1"><stop stop-color="${g[1]}"/><stop offset="1" stop-color="${g[2]}"/></linearGradient>`).join('')}</defs>${art[el.getAttribute('name')]}</svg>${el.hasAttribute('running')?'<i></i>':''}`);

const cell = s => s.split(' ').map(n => n === '|' ? '<div class="sep"></div>' : `<dock-icon name="${n.replace('*','')}"${n.endsWith('*')?' running':''}></dock-icon>`).join('');
define('mac-dock', `<style>:host{display:flex;box-sizing:border-box;width:1215px;height:50px;margin:3px 0 0 32.500px;padding-left:1.600px;flex:none;position:relative;border:1px solid #484746;border-bottom:0;border-radius:5px 5px 0 0;background:linear-gradient(90deg,#302b2a 0,#292627 280px,#1d2024 500px,#121a21 750px,#141a1f 870px,#241f20 1050px,#2b2321 100%)}
.sep{width:18.500px;height:36px;margin-top:6px;flex:none;background:linear-gradient(#5d6062,#5d6062) 9px 0/1px 100% no-repeat}</style>`
+ cell('finder* siri rocket store mission mail contacts safari calendar facetime news music podcasts tv photos books booth settings maps chrome* | terminal* code* word* slack* | folder doc codewin termwin trash'));
</script>
</body>
</html>
